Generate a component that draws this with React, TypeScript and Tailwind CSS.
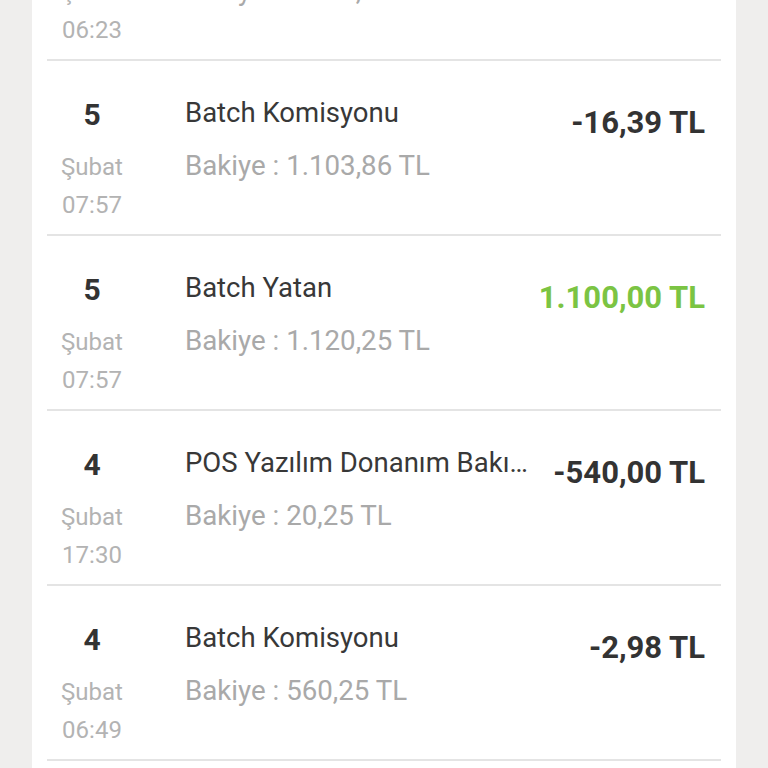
import React from 'react';

interface Txn {
  day: string;
  month: string;
  time: string;
  title: string;
  balance: string;
  amount: string;
  positive?: boolean;
}

const txns: Txn[] = [
  { day: '6', month: 'Şubat', time: '06:23', title: 'Batch Komisyonu', balance: '1.090,36 TL', amount: '-13,50 TL' },
  { day: '5', month: 'Şubat', time: '07:57', title: 'Batch Komisyonu', balance: '1.103,86 TL', amount: '-16,39 TL' },
  { day: '5', month: 'Şubat', time: '07:57', title: 'Batch Yatan', balance: '1.120,25 TL', amount: '1.100,00 TL', positive: true },
  { day: '4', month: 'Şubat', time: '17:30', title: 'POS Yazılım Donanım Bakım Bedeli', balance: '20,25 TL', amount: '-540,00 TL' },
  { day: '4', month: 'Şubat', time: '06:49', title: 'Batch Komisyonu', balance: '560,25 TL', amount: '-2,98 TL' },
  { day: '3', month: 'Şubat', time: '07:12', title: 'Batch Yatan', balance: '563,23 TL', amount: '560,00 TL', positive: true },
];

const TxnRow: React.FC<{ txn: Txn }> = ({ txn }) => (
  <div className="flex items-start h-[175px] border-b-2 border-[#e4e4e4]">
    <div className="w-[90px] shrink-0 flex flex-col items-center">
      <span className="mt-[36px] text-[30px] leading-[36px] font-bold text-[#333333]">{txn.day}</span>
      <span className="mt-[15px] text-[24px] leading-[38px] text-[#b3b3b3]">{txn.month}</span>
      <span className="text-[24px] leading-[38px] text-[#b3b3b3]">{txn.time}</span>
    </div>
    <div className="ml-[48px] flex-1 min-w-0">
      <p className="mt-[34px] text-[27.5px] leading-[36px] text-[#383838] truncate">{txn.title}</p>
      <p className="mt-[17px] text-[27.7px] leading-[36px] text-[#a9a9a9] truncate">Bakiye : {txn.balance}</p>
    </div>
    <div
      className={`ml-[20px] mr-[16px] mt-[42px] shrink-0 text-[31px] leading-[40px] font-bold ${
        txn.positive ? 'text-[#7bc443]' : 'text-[#333333]'
      }`}
    >
      {txn.amount}
    </div>
  </div>
);

export default function App() {
  return (
    <div className="h-[768px] overflow-hidden bg-[#efeeed]" style={{ fontFamily: 'Roboto, "Noto Sans", sans-serif' }}>
      <div className="mx-8 h-full overflow-hidden bg-white px-[15px]">
        <div className="-mt-[114px]">
          {txns.map((t, i) => (
            <TxnRow key={i} txn={t} />
          ))}
        </div>
      </div>
    </div>
  );
}
